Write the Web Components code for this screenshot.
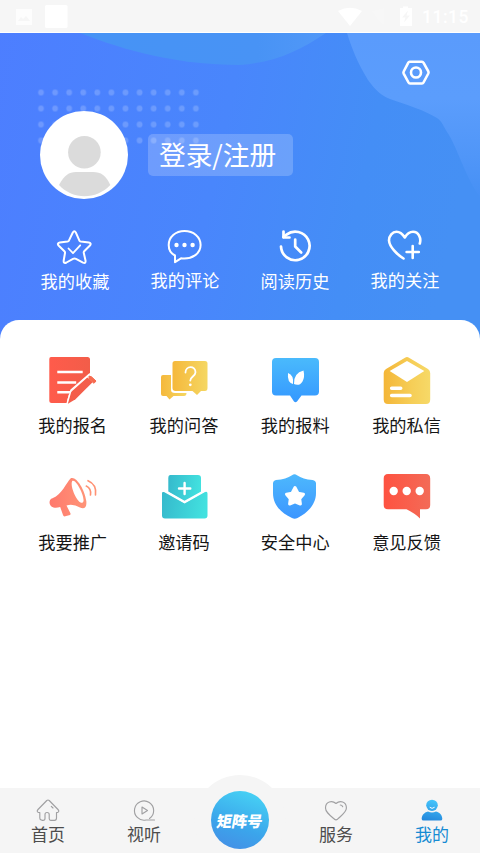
<!DOCTYPE html>
<html lang="zh-CN">
<head>
<meta charset="utf-8">
<title>我的</title>
<style>
html,body{margin:0;padding:0}
body{width:480px;height:853px;overflow:hidden;background:#fff;font-family:Roboto,"Noto Sans CJK SC",sans-serif}
</style>
</head>
<body>
<profile-page></profile-page>
<script>
const define = (name, html) => customElements.define(name, class extends HTMLElement {
  constructor() {
    super();
    const t = document.createElement('template');
    t.innerHTML = html;
    this.attachShadow({ mode: 'open' }).append(t.content.cloneNode(true));
  }
});

define('status-bar', `
<style>
:host{display:flex;height:32px;box-sizing:border-box;background:#f6f6f6;box-shadow:0 1px #fff;align-items:center;color:#fff}
svg{flex:1;height:32px}
span{font:500 17.5px/32px Roboto,sans-serif;letter-spacing:.5px;width:58px;height:32px;padding-top:1px;box-sizing:border-box}
</style>
<svg viewBox="0 0 422 32" fill="#fff">
<path d="M16 9h16v16H16zm2 12h12l-4-5-3 3-2-2z" fill-rule="evenodd" opacity=".75"/>
<rect x="45" y="5" width="22.500" height="23" rx="1.500"/>
<path d="M338 11q12-6.500 24 0L350 26z"/>
<path d="M372 11l12-3v17l-5-4z" opacity=".16"/>
<path fill-rule="evenodd" d="M400 8h3V6.500h5V8h4v18h-12zm8 2.500l-6 7h3.500l-1.500 5 6-7h-3.500z"/>
</svg><span>11:15</span>`);

define('login-button', `
<style>
:host{display:block;width:145px;height:42px;box-sizing:border-box;padding-left:11px;border-radius:5px;background:rgba(255,255,255,.2);color:#fff;font:400 26.700px/39px "Noto Sans CJK SC",sans-serif;white-space:nowrap}
</style><slot></slot>`);

define('user-avatar', `
<style>:host{display:block;width:88px;height:88px}svg{display:block}</style>
<svg width="88" height="88" viewBox="40 110.500 88 88"><circle cx="84" cy="154.500" r="44" fill="#fff"/>
<circle cx="84.400" cy="151.800" r="16.300" fill="#dbdbdb"/>
<path d="M59 184.500C64 175 69 171.500 76 171.500H93C101 171.500 106 175 110.300 184.500C96 199.500 73 199.500 59 184.500Z" fill="#dbdbdb"/></svg>`);

define('hero-backdrop', `
<style>:host{display:block;width:480px;height:310px}svg{display:block}</style>
<svg width="480" height="310" viewBox="0 33 480 310">
<defs>
<linearGradient id="bg" gradientUnits="userSpaceOnUse" x1="0" y1="0" x2="480" y2="100"><stop stop-color="#4d7eff"/><stop offset=".5" stop-color="#4986fc"/><stop offset=".8" stop-color="#448ef6"/><stop offset="1" stop-color="#4590f4"/></linearGradient>
<linearGradient id="top"><stop stop-color="#4693f5"/><stop offset=".72" stop-color="#4893f5"/><stop offset="1" stop-color="#5198f8"/></linearGradient>
<linearGradient id="right" x1="0" y1="0" x2="0" y2="1"><stop stop-color="#5a9bfc"/><stop offset=".4" stop-color="#5b9dfc"/><stop offset=".75" stop-color="#5096f8"/><stop offset="1" stop-color="#4690f5"/></linearGradient>
<pattern id="dots" patternUnits="userSpaceOnUse" x="34" y="84.500" width="14.080" height="16"><circle cx="7" cy="8" r="2.900" fill="#fff" fill-opacity=".19"/></pattern>
</defs>
<rect y="33" width="480" height="310" fill="url(#bg)"/>
<path d="M80 33C126 51 178 65 240 65C276 62 299 51 326 33Z" fill="url(#top)"/>
<path d="M347 33C351 46 357 62 368 80C376 91 382 96 390 99C410 106 424 110 437 118C442 121 443 126 449 135C458 150 466 178 480 197V33Z" fill="url(#right)"/>
<rect x="34" y="84.500" width="169" height="64" fill="url(#dots)"/>
</svg>`);

define('icon-tile', `
<style>
:host{display:flex;flex-direction:column;align-items:center;font:400 17.200px/24px "Noto Sans CJK SC",sans-serif;white-space:nowrap}
::slotted(svg){display:block;flex:none}
</style><slot name="icon"></slot><span><slot></slot></span>`);

define('profile-hero', `
<style>
:host{display:grid;height:287px;margin-top:1px;color:#fff}
hero-backdrop,.front{grid-area:1/1}
.front{display:flex;flex-direction:column;z-index:1}
.gear{display:flex;justify-content:flex-end;height:77.500px;padding:22px 46px 0 0;box-sizing:border-box}
.who{display:flex;gap:20px;padding-left:40px;height:88px;align-items:center}
.row{display:grid;grid-template-columns:repeat(4,110px);padding:27.500px 20px 0}
svg{fill:none;stroke:#fff;stroke-linecap:round;stroke-linejoin:round}
</style>
<hero-backdrop></hero-backdrop>
<div class="front">
<div class="gear"><svg width="36" height="36" viewBox="398 55 36 36" stroke-width="2.600"><path d="M409.500 61.800H422Q423 61.800 423.600 62.800L428.300 71.300Q428.800 72.500 428.300 73.500L423.500 82.500Q423 83.500 422 83.500H410Q409 83.500 408.500 82.500L403.700 73.600Q403.200 72.500 403.700 71.500L408.300 62.700Q408.800 61.800 409.500 61.800Z"/><circle cx="416" cy="72.500" r="5"/></svg></div>
<div class="who"><user-avatar></user-avatar><login-button>登录/注册</login-button></div>
<div class="row">
<icon-tile><svg slot="icon" width="60" height="43" viewBox="45 226 60 43" stroke-width="2"><path d="M72.700 232.800Q74.300 229.800 76 232.800L79.300 240.400Q79.800 241.300 80.800 241.500L88.900 242.600Q92 243.300 89.700 245.700L84.200 251.200Q83.500 252 83.800 253L85.500 260.500Q86 264 83 262.600L76 258.900Q74.500 258.200 73 258.900L66.500 262.500Q63.300 264 63.700 260.500L65 253Q65.200 252 64.400 251.200L58.800 245.700Q56.500 243.300 59.800 242.600L67.500 241.500Q68.500 241.300 69 240.400Z"/><path d="M68.500 248.500L73 253.200L80.200 245.300" stroke-width="1.800"/></svg>我的收藏</icon-tile>
<icon-tile><svg slot="icon" width="60" height="42" viewBox="155 226 60 42" stroke-width="2"><path d="M175 255.500V262.200L181 258.300C192 259.800 200.600 253.500 200.600 245C200.600 236.800 193.500 231 184.500 231C175.500 231 168.700 237 168.700 245C168.700 249.500 171 253.500 175 255.500Z"/><g fill="#fff" stroke="none"><circle cx="176.500" cy="245" r="2.200"/><circle cx="184.500" cy="245" r="2.200"/><circle cx="192.600" cy="245" r="2.200"/></g></svg>我的评论</icon-tile>
<icon-tile><svg slot="icon" width="60" height="43" viewBox="265 226 60 43" stroke-width="2.700"><path d="M281 246.500A14.300 14.300 0 1 0 286.500 234.600L283.500 237"/><path d="M283.500 231.500V237.500H289.500M295.200 239.500V246.500L301.200 252.500"/></svg>阅读历史</icon-tile>
<icon-tile><svg slot="icon" width="60" height="42" viewBox="375 226 60 42" stroke-width="2.600"><path d="M403.500 258.500C397 254.500 389.500 247 389 240.500C389 235.500 392.500 231.800 396.500 231.800C400.500 231.800 402.500 234 404.800 237.500C407 234 409 231.800 413 231.800C418.500 231.800 421.500 238 419.800 243.500M412.700 246V258M406.600 252H418.800"/></svg>我的关注</icon-tile>
</div></div>`);

define('service-grid', `
<style>
:host{display:grid;grid-template-columns:repeat(4,111.300px);grid-auto-rows:117px;position:relative;height:468px;box-sizing:border-box;padding:32px 17px 0;border-radius:19px 19px 0 0;background:#fff;color:#151515}
.w{fill:none;stroke:#fff;stroke-width:2.400;stroke-linecap:round;stroke-linejoin:round}
</style>
<icon-tile><svg slot="icon" width="60" height="61" viewBox="43 352 60 61"><defs><linearGradient id="r1"><stop stop-color="#ff5b4b"/><stop offset="1" stop-color="#f25d49"/></linearGradient></defs><path d="M51 357H87.500Q90 357 90 359.500V373.500L71.500 390Q68 394 67 403H51.500Q49.300 403 49.300 401V359Q49.300 357 51 357Z" fill="url(#r1)"/><path class="w" d="M58.500 372H81.500M58.500 382.500H75M58.500 392.200H69" style="stroke-linecap:square"/><path d="M87.300 377.500L92.800 382L75.500 399.300L67.500 404L69.300 393.500Z" fill="#f45e4b"/><path d="M89 376L91.500 376.800L96 381L94 383.300L89 378.800Z" fill="#f66b50" stroke="#f66b50" stroke-width="1"/><path d="M89.500 374L71 390L67 404" class="w" style="stroke-width:1.500"/></svg>我的报名</icon-tile>
<icon-tile><svg slot="icon" width="60" height="61" viewBox="154 352 60 61"><defs><linearGradient id="y1"><stop stop-color="#f5b83b"/><stop offset="1" stop-color="#f5d763"/></linearGradient></defs><path d="M163 375H171V389.800Q171 393 175 393H186.500Q186.500 396 184 396H173.500L169.500 399.500L166.500 396H163Q161 396 161 394V377Q161 375 163 375Z" fill="url(#y1)"/><path d="M175 361H205Q207.500 361 207.500 363.500V388Q207.500 391 205 391H201L197 395L192.500 391H175.500Q172.500 391 172.500 388V363.500Q172.500 361 175 361Z" fill="url(#y1)"/><path class="w" d="M185.500 372.500C185.500 365.500 195.500 365.500 195.500 372.200C195.500 376 190.300 377 190.300 380.500" style="stroke-width:1.800"/><circle cx="190.300" cy="384.800" r="1.400" fill="#fff"/></svg>我的问答</icon-tile>
<icon-tile><svg slot="icon" width="60" height="61" viewBox="265 352 60 61"><defs><linearGradient id="b1" x2="0" y2="1"><stop stop-color="#4abafc"/><stop offset="1" stop-color="#3598ff"/></linearGradient></defs><path d="M276 358H315Q319 358 319 362V391.500Q319 395.500 315 395.500H301.500L297 401.500Q295.500 403 294 401.500L290 395.500H276Q272 395.500 272 391.500V362Q272 358 276 358Z" fill="url(#b1)"/><path d="M303.500 370.500Q305 377 302.500 381.500C300 386 296 385 294 384Q293.500 373 303.500 370.500ZM288 373Q294 375 293 384Q287 382.500 288 373Z" fill="#fff"/></svg>我的报料</icon-tile>
<icon-tile><svg slot="icon" width="60" height="61" viewBox="377 352 60 61"><defs><linearGradient id="y2"><stop stop-color="#f4b638"/><stop offset=".6" stop-color="#f6ce57"/><stop offset="1" stop-color="#f6d968"/></linearGradient></defs><path d="M386 369L405 357.700Q407 356.500 409 357.700L428 369Q430.200 370.500 430.200 373V399.500Q430.200 404 426 404H388Q383.700 404 383.700 399.500V373Q383.700 370.500 386 369Z" fill="url(#y2)"/><path d="M407 361L424.300 371L407 382L389.700 371Z" fill="#fff"/><path class="w" style="stroke-width:3.600" d="M391.700 388.300H400.700M391.700 395.500H410"/></svg>我的私信</icon-tile>
<icon-tile><svg slot="icon" width="60" height="61" viewBox="43 469 60 61"><defs><linearGradient id="r2"><stop stop-color="#ff796d"/><stop offset="1" stop-color="#ff9477"/></linearGradient></defs><path fill-rule="evenodd" fill="url(#r2)" d="M70.500 478.500C76 475.500 84.500 489 86.300 501C87 507 84.500 509.500 80 507.500Q73 503.500 66.500 505.500L70.300 513Q71 514.300 70 514.900L65.200 516.300Q63.500 516.800 63 515L60.200 507Q56.500 508.200 53.500 507.500C48.500 506 48.300 499.500 52.500 498.300C62.500 494 66 483 70.500 478.500ZM72.200 481C69.500 486 77.500 504 82.400 502.800C87.200 500.500 76 477.500 72.200 481Z"/><path d="M86.300 486Q91.500 488.500 90.500 495M88 480.700Q97 484.500 95.500 495" fill="none" stroke="#ff9274" stroke-width="1.600" stroke-linecap="round"/></svg>我要推广</icon-tile>
<icon-tile><svg slot="icon" width="60" height="61" viewBox="154 469 60 61"><defs><linearGradient id="t1" x2="1" y2=".1"><stop stop-color="#35b9cc"/><stop offset="1" stop-color="#42e1df"/></linearGradient></defs><path d="M170.500 475H198Q201 475 201 478V493L184.600 501.500L168.300 492V478Q168.300 475 170.500 475Z" fill="url(#t1)"/><path d="M162 493Q162 491.500 164 492L184.600 503.500L205 492Q207.500 491 207.500 493.500V515.500Q207.500 518.500 204.500 518.500H165Q162 518.500 162 515.500Z" fill="url(#t1)"/><path class="w" d="M162 489L184.500 501.800L207.500 489" style="stroke-width:2;stroke-linecap:butt"/><path class="w" d="M184.600 483V494M179 488.500H190.300"/></svg>邀请码</icon-tile>
<icon-tile><svg slot="icon" width="60" height="61" viewBox="265 469 60 61"><defs><linearGradient id="b2" x2="0" y2="1"><stop stop-color="#4db8fd"/><stop offset="1" stop-color="#3c96ff"/></linearGradient></defs><path d="M292 475.200Q294.500 473.300 297 475.200C301 478 306 479.500 312.500 480Q316 480.500 316 483.500V493C316 503.500 309 512 297.500 518Q294.600 519.500 292 518C279.500 512 273 504 273 493V483.500Q273 480.500 276 480C283 479.500 288 478 292 475.200Z" fill="url(#b2)"/><path d="M295 487.500L298 493.200L303.500 494.200L299.700 498.700L300.400 504L295 501.800L289.600 504L290.300 498.700L286.500 494.200L292 493.200Z" fill="#fff" stroke="#fff" stroke-width="3" stroke-linejoin="round"/></svg>安全中心</icon-tile>
<icon-tile><svg slot="icon" width="60" height="61" viewBox="377 469 60 61"><defs><linearGradient id="r3"><stop stop-color="#fe5241"/><stop offset="1" stop-color="#f36b57"/></linearGradient></defs><path d="M388 474H426Q430.200 474 430.200 478.500V505Q430.200 509.300 426 509.300H420V518.500Q415 513.500 406.500 509.300H388Q383.700 509.300 383.700 505V478.500Q383.700 474 388 474Z" fill="url(#r3)"/><g fill="#fff"><circle cx="393.700" cy="491" r="4.200"/><circle cx="406.700" cy="491" r="4.200"/><circle cx="419.700" cy="491" r="4.200"/></g></svg>意见反馈</icon-tile>`);

define('matrix-badge', `
<style>
:host{display:flex;align-items:center;justify-content:center;width:58px;height:58px;border-radius:50%;background:linear-gradient(200deg,#47d4f5 5%,#3ba5eb 60%,#468be5);color:#fff;font:900 15.300px/20px "Noto Sans CJK SC",sans-serif}
span{display:block;transform:skewX(-10deg);white-space:nowrap}
</style><span><slot></slot></span>`);

define('tab-bar', `
<style>
:host{display:grid;grid-template-columns:repeat(5,96px);height:65px;background:#f5f5f5;position:relative;color:#4d4d4d}
icon-tile{font-size:17px;line-height:24px}
.center{display:flex;justify-content:center;align-items:center;width:92px;height:92px;margin:-13px 2px 0;border-radius:50%;background:#f5f5f5;box-sizing:border-box;padding-bottom:2px}
.on{color:#168bd3}
svg{fill:none;stroke:#a0a0a2;stroke-width:1.150;stroke-linecap:round;stroke-linejoin:round}
</style>
<icon-tile><svg slot="icon" width="50" height="34" viewBox="23 788 50 34"><path d="M42 820H41.500Q39.800 820 39.800 818V812.500H38.500Q36.200 811.500 38 809.500L46.800 800.500Q48 799.500 49.200 800.500L58 809.500Q59.800 811.500 57.500 812.500H56.500V818Q56.500 820.300 54.500 820.300H50.700Q49.200 820.300 49.200 818.500V814.500Q49.200 812.500 47 812.500Q45 812.500 45 814.500V818.500Q45 820.300 43 820.300H42M51.300 806.300L53 808"/></svg>首页</icon-tile>
<icon-tile><svg slot="icon" width="50" height="34" viewBox="119 788 50 34"><path d="M154.500 820H146A9.600 9.600 0 1 1 149.500 818.500M142 807L147.500 810.500L142 814Z"/></svg>视听</icon-tile>
<div class="center"><matrix-badge>矩阵号</matrix-badge></div>
<icon-tile><svg slot="icon" width="50" height="34" viewBox="311 788 50 34"><path d="M336 803.500C332 800 325.500 801.500 325.500 808C325.500 812 329.500 815 334.500 819.200Q336 820.500 337.500 819.200C342 815 346.400 812 346.400 808C346.400 801.500 340 800 336 803.500ZM340.300 805Q342 805 342.700 806.700"/></svg>服务</icon-tile>
<icon-tile class="on"><svg slot="icon" width="50" height="34" viewBox="407 788 50 34"><defs><linearGradient id="p" gradientUnits="userSpaceOnUse" x1="434" y1="800" x2="430" y2="821"><stop stop-color="#45c5fb"/><stop offset="1" stop-color="#2488dc"/></linearGradient></defs><g stroke="none" fill="url(#p)"><ellipse cx="432" cy="805.300" rx="5.800" ry="5.600"/><path d="M428 811.500Q432 813.500 436 811.500C440.500 812.500 442.300 816 442.300 819Q442.300 820.500 440.500 820.500H423.500Q421.700 820.500 421.700 819C421.700 815.500 424 812.500 428 811.500Z"/></g><path d="M430 807.500Q432 809.500 434.300 807.500" stroke="#fff" style="stroke-width:1"/></svg>我的</icon-tile>`);

define('profile-page', `
<style>:host{display:flex;flex-direction:column;width:480px;height:853px;overflow:hidden}</style>
<status-bar></status-bar><profile-hero></profile-hero><service-grid></service-grid><tab-bar></tab-bar>`);
</script>
</body>
</html>
